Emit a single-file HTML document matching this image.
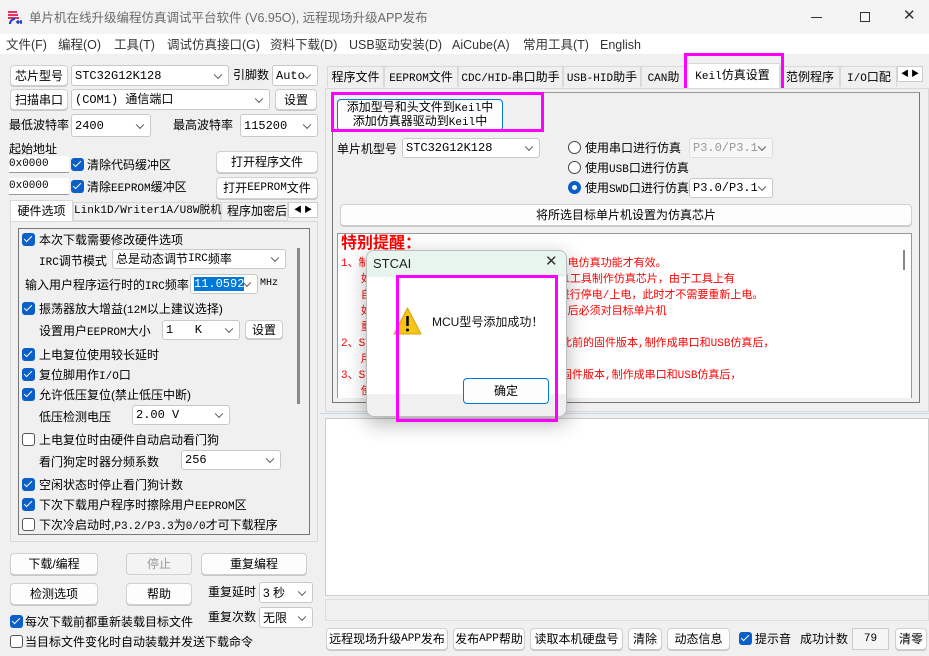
<!DOCTYPE html>
<html><head><meta charset="utf-8"><style>
*{box-sizing:border-box;margin:0;padding:0}
body{width:929px;height:656px;overflow:hidden;background:#f0f0f0;font-family:"Liberation Sans","Noto Sans CJK SC",sans-serif;font-size:12px;color:#000;position:relative}
.a{position:absolute;white-space:nowrap;line-height:16px}
.btn{position:absolute;background:#fdfdfd;border:1px solid #d0d0d0;border-radius:4px;text-align:center;font-size:12px;display:flex;align-items:center;justify-content:center;box-shadow:0 1px 0 #c8c8c8;line-height:14px}
.sel{position:absolute;background:#fff;border:1px solid #c8c8c8;border-radius:3px;padding-left:3px;font-family:"Liberation Mono","Noto Sans CJK SC",monospace;font-size:12px;display:flex;align-items:center;line-height:14px}
.sel:after{content:"";position:absolute;right:7px;top:50%;width:5px;height:5px;border-right:1px solid #555;border-bottom:1px solid #555;transform:translateY(-70%) rotate(45deg)}
.cb{position:absolute;width:13px;height:13px;border-radius:3px;background:#0a5fc8}
.cb:after{content:"";position:absolute;left:4px;top:1px;width:3px;height:7px;border-right:1.5px solid #fff;border-bottom:1.5px solid #fff;transform:rotate(45deg)}
.ub{position:absolute;width:13px;height:13px;border-radius:3px;border:1px solid #555;background:#fff}
.m{font-family:"Liberation Mono","Noto Sans CJK SC",monospace;font-size:11px;line-height:1}
.tab{position:absolute;top:66px;height:21px;border:1px solid #d9d9d9;border-bottom:none;background:#f0f0f0;font-size:12px;text-align:center;line-height:20px}
.red{position:absolute;left:341px;color:#f00;font-family:"Liberation Mono","Noto Sans CJK SC",monospace;font-size:11px;white-space:nowrap;line-height:16px}
.mg{position:absolute;border:3px solid #f0f;}
.mn{position:absolute;top:37px;font-size:12.5px;color:#333;line-height:16px;white-space:nowrap}
</style></head><body>
<div class="a" style="left:0;top:0;width:929px;height:34px;background:#f3f3f3"></div>
<svg class="a" style="left:7px;top:9px" width="16" height="16" viewBox="0 0 16 16"><path d="M1 3h9M1 6h10M1 9h11" stroke="#e83060" stroke-width="2"/><path d="M3 15a5 5 0 0 1 5-5" stroke="#1a3ad0" stroke-width="2" fill="none"/><path d="M11 11v4M14 11v4M9 13h6" stroke="#1a3ad0" stroke-width="1.5"/></svg>
<div class="a" style="left:29px;top:10px;font-size:12.5px;color:#6a6a6a">单片机在线升级编程仿真调试平台软件 (V6.95O), 远程现场升级APP发布</div>
<div class="a" style="left:811px;top:17px;width:11px;height:1px;background:#333"></div>
<div class="a" style="left:860px;top:12px;width:10px;height:10px;border:1px solid #333"></div>
<div class="a" style="left:903px;top:8px;font-size:15px;color:#333">✕</div>
<div class="a" style="left:0;top:34px;width:929px;height:20px;background:#fff"></div>
<div class="mn" style="left:6px">文件(F)</div>
<div class="mn" style="left:58px">编程(O)</div>
<div class="mn" style="left:114px">工具(T)</div>
<div class="mn" style="left:167px">调试仿真接口(G)</div>
<div class="mn" style="left:270px">资料下载(D)</div>
<div class="mn" style="left:349px">USB驱动安装(D)</div>
<div class="mn" style="left:452px">AiCube(A)</div>
<div class="mn" style="left:523px">常用工具(T)</div>
<div class="mn" style="left:600px">English</div>

<div class="btn" style="left:10px;top:65px;width:58px;height:21px">芯片型号</div>
<div class="sel" style="left:71px;top:65px;width:158px;height:21px">STC32G12K128</div>
<div class="a" style="left:233px;top:67px">引脚数</div>
<div class="sel" style="left:272px;top:65px;width:46px;height:21px">Auto</div>
<div class="btn" style="left:10px;top:89px;width:58px;height:21px">扫描串口</div>
<div class="sel" style="left:71px;top:89px;width:199px;height:21px">(COM1) 通信端口</div>
<div class="btn" style="left:275px;top:89px;width:42px;height:21px">设置</div>
<div class="a" style="left:9px;top:117px">最低波特率</div>
<div class="sel" style="left:71px;top:114px;width:80px;height:23px">2400</div>
<div class="a" style="left:173px;top:117px">最高波特率</div>
<div class="sel" style="left:240px;top:114px;width:78px;height:23px">115200</div>
<div class="a" style="left:9px;top:141px">起始地址</div>
<div class="a m" style="left:9px;top:156px;width:60px;height:17px;background:#fff;border-bottom:1px solid #999;line-height:16px">0x0000</div>
<div class="cb" style="left:71px;top:158px"></div><div class="a" style="left:87px;top:157px">清除代码缓冲区</div>
<div class="btn" style="left:216px;top:151px;width:102px;height:22px">打开程序文件</div>
<div class="a m" style="left:9px;top:178px;width:60px;height:17px;background:#fff;border-bottom:1px solid #999;line-height:16px">0x0000</div>
<div class="cb" style="left:71px;top:180px"></div><div class="a" style="left:87px;top:179px">清除<span class="m">EEPROM</span>缓冲区</div>
<div class="btn" style="left:216px;top:177px;width:102px;height:22px">打开<span class="m">EEPROM</span>文件</div>
<div class="a" style="left:10px;top:200px;width:63px;height:22px;background:#fff;border:1px solid #d9d9d9;border-bottom:none;text-align:center;line-height:20px">硬件选项</div>
<div class="a m" style="left:73px;top:202px;width:148px;height:19px;border:1px solid #d9d9d9;text-align:center;line-height:17px">Link1D/Writer1A/U8W脱机</div>
<div class="a" style="left:221px;top:202px;width:67px;height:19px;border:1px solid #d9d9d9;overflow:hidden;line-height:17px;padding-left:5px">程序加密后</div>
<div class="a" style="left:288px;top:202px;width:30px;height:16px;background:#fff;border:1px solid #ccc;font-size:8px;line-height:14px;text-align:center">◀ ▶</div>
<div class="a" style="left:10px;top:221px;width:308px;height:321px;border:1px solid #d9d9d9;background:#f0f0f0"></div>
<div class="a" style="left:18px;top:228px;width:292px;height:307px;border:1px solid #777"></div>
<div class="a" style="left:297px;top:248px;width:3px;height:156px;background:#888"></div>
<div class="cb" style="left:22px;top:233px"></div><div class="a" style="left:39px;top:232px">本次下载需要修改硬件选项</div>
<div class="a" style="left:39px;top:253px"><span class="m">IRC</span>调节模式</div>
<div class="sel" style="left:112px;top:249px;width:174px;height:20px;font-family:'Liberation Sans','Noto Sans CJK SC',sans-serif">总是动态调节<span class="m">IRC</span>频率</div>
<div class="a" style="left:25px;top:277px">输入用户程序运行时的<span class="m">IRC</span>频率</div>
<div class="sel" style="left:190px;top:274px;width:68px;height:20px"><span style="background:#0078d7;color:#fff">11.0592</span></div>
<div class="a m" style="left:260px;top:279px;font-size:10px">MHz</div>
<div class="cb" style="left:22px;top:302px"></div><div class="a" style="left:39px;top:301px">振荡器放大增益(<span class="m">12M</span>以上建议选择)</div>
<div class="a" style="left:39px;top:323px">设置用户<span class="m">EEPROM</span>大小</div>
<div class="sel" style="left:162px;top:320px;width:78px;height:20px">1 &nbsp; K</div>
<div class="btn" style="left:245px;top:320px;width:38px;height:19px">设置</div>
<div class="cb" style="left:22px;top:348px"></div><div class="a" style="left:39px;top:347px">上电复位使用较长延时</div>
<div class="cb" style="left:22px;top:368px"></div><div class="a" style="left:39px;top:367px">复位脚用作<span class="m">I/O</span>口</div>
<div class="cb" style="left:22px;top:388px"></div><div class="a" style="left:39px;top:387px">允许低压复位(禁止低压中断)</div>
<div class="a" style="left:39px;top:409px">低压检测电压</div>
<div class="sel" style="left:132px;top:405px;width:98px;height:20px">2.00 V</div>
<div class="ub" style="left:22px;top:433px"></div><div class="a" style="left:39px;top:432px">上电复位时由硬件自动启动看门狗</div>
<div class="a" style="left:39px;top:454px">看门狗定时器分频系数</div>
<div class="sel" style="left:181px;top:450px;width:100px;height:20px">256</div>
<div class="cb" style="left:22px;top:478px"></div><div class="a" style="left:39px;top:477px">空闲状态时停止看门狗计数</div>
<div class="cb" style="left:22px;top:498px"></div><div class="a" style="left:39px;top:497px">下次下载用户程序时擦除用户<span class="m">EEPROM</span>区</div>
<div class="ub" style="left:22px;top:518px"></div><div class="a" style="left:39px;top:517px">下次冷启动时,<span class="m">P3.2/P3.3</span>为<span class="m">0/0</span>才可下载程序</div>
<div class="btn" style="left:10px;top:553px;width:88px;height:22px">下载/编程</div>
<div class="btn" style="left:126px;top:553px;width:66px;height:22px;color:#999;background:#f4f4f4;box-shadow:none">停止</div>
<div class="btn" style="left:201px;top:553px;width:106px;height:22px">重复编程</div>
<div class="btn" style="left:10px;top:583px;width:88px;height:22px">检测选项</div>
<div class="btn" style="left:126px;top:583px;width:66px;height:22px">帮助</div>
<div class="a" style="left:208px;top:584px">重复延时</div>
<div class="sel" style="left:259px;top:582px;width:54px;height:21px;font-family:'Liberation Sans','Noto Sans CJK SC',sans-serif">3 秒</div>
<div class="a" style="left:208px;top:609px">重复次数</div>
<div class="sel" style="left:259px;top:607px;width:54px;height:21px;font-family:'Liberation Sans','Noto Sans CJK SC',sans-serif">无限</div>
<div class="cb" style="left:10px;top:615px"></div><div class="a" style="left:25px;top:614px">每次下载前都重新装载目标文件</div>
<div class="ub" style="left:10px;top:635px"></div><div class="a" style="left:25px;top:634px">当目标文件变化时自动装载并发送下载命令</div>

<div class="tab" style="left:327px;width:57px">程序文件</div>
<div class="tab" style="left:384px;width:74px"><span class="m">EEPROM</span>文件</div>
<div class="tab" style="left:458px;width:105px"><span class="m">CDC/HID</span>-串口助手</div>
<div class="tab" style="left:563px;width:78px"><span class="m">USB-HID</span>助手</div>
<div class="tab" style="left:641px;width:45px;overflow:hidden"><span class="m">CAN</span>助手</div>
<div class="tab" style="left:685px;top:63px;height:28px;width:95px;background:#fff;line-height:22px"><span class="m">Keil</span>仿真设置</div>
<div class="tab" style="left:780px;width:60px">范例程序</div>
<div class="tab" style="left:840px;width:57px;overflow:hidden;text-align:left;padding-left:6px"><span class="m">I/O</span>口配置</div>
<div class="a" style="left:897px;top:66px;width:26px;height:16px;background:#fff;border:1px solid #ccc;font-size:8px;line-height:14px;text-align:center">◀ ▶</div>
<div class="mg" style="left:684px;top:53px;width:100px;height:40px"></div>
<div class="a" style="left:325px;top:88px;width:604px;height:324px;border:1px solid #d9d9d9;background:#f0f0f0"></div>
<div class="a" style="left:332px;top:92px;width:588px;height:311px;border:1px solid #777;border-top-color:#999"></div>
<div class="btn" style="left:337px;top:99px;width:166px;height:32px;line-height:12px;border-color:#0078d7;flex-direction:column"><div>添加型号和头文件到<span class="m">Keil</span>中</div><div>添加仿真器驱动到<span class="m">Keil</span>中</div></div>
<div class="mg" style="left:331px;top:92px;width:213px;height:40px"></div>
<div class="a" style="left:337px;top:141px">单片机型号</div>
<div class="sel" style="left:402px;top:138px;width:138px;height:20px">STC32G12K128</div>
<div class="a" style="left:568px;top:141px;width:13px;height:13px;border:1px solid #444;border-radius:50%;background:#fff"></div>
<div class="a" style="left:585px;top:140px">使用串口进行仿真</div>
<div class="sel" style="left:689px;top:138px;width:84px;height:20px;color:#999;background:#f7f7f7;border-color:#ddd">P3.0/P3.1</div>
<div class="a" style="left:568px;top:161px;width:13px;height:13px;border:1px solid #444;border-radius:50%;background:#fff"></div>
<div class="a" style="left:585px;top:160px">使用<span class="m">USB</span>口进行仿真</div>
<div class="a" style="left:568px;top:181px;width:13px;height:13px;border:4px solid #0a5fc8;border-radius:50%;background:#fff"></div>
<div class="a" style="left:585px;top:180px">使用<span class="m">SWD</span>口进行仿真</div>
<div class="sel" style="left:689px;top:178px;width:84px;height:20px">P3.0/P3.1</div>
<div class="btn" style="left:340px;top:204px;width:572px;height:22px">将所选目标单片机设置为仿真芯片</div>
<div class="a" style="left:337px;top:233px;width:575px;height:165px;background:#fff;border:1px solid #999;border-bottom:none"></div>
<div class="a" style="left:903px;top:250px;width:2px;height:20px;background:#888"></div>
<div class="red" style="top:234px;font-size:16px;line-height:20px;font-weight:bold;font-family:'Liberation Sans','Noto Sans CJK SC',sans-serif">特别提醒：</div>
<div class="red" style="top:256px">1、制作仿真芯片后，需要给目标单片机重新上电仿真功能才有效。</div>
<div class="red" style="top:272px">&nbsp;&nbsp;&nbsp;如果使用U8W/U8-Mini/STC-USB Link1工具制作仿真芯片，由于工具上有</div>
<div class="red" style="top:288px">&nbsp;&nbsp;&nbsp;自动上电控制电路，所以制作完成后自动进行停电/上电，此时才不需要重新上电。</div>
<div class="red" style="top:304px">&nbsp;&nbsp;&nbsp;如果使用普通串口或USB下载口，制作完成后必须对目标单片机</div>
<div class="red" style="top:320px">&nbsp;&nbsp;&nbsp;重新上电，然后才可使用Keil进行仿真。</div>
<div class="red" style="top:336px">2、STC-USB Link1工具需要升级7.4.13及此前的固件版本,制作成串口和USB仿真后，</div>
<div class="red" style="top:352px">&nbsp;&nbsp;&nbsp;用</div>
<div class="red" style="top:368px">3、STC-USB Link1工具如果是使用7.4.13固件版本,制作成串口和USB仿真后，</div>
<div class="red" style="top:384px;height:14px;overflow:hidden">&nbsp;&nbsp;&nbsp;使用时需要将固件版本更新到7.4.14版本</div>
<div class="a" style="left:320px;top:413px;width:609px;height:1px;background:#c8d8e8"></div>
<div class="a" style="left:325px;top:418px;width:604px;height:178px;background:#fff;border:1px solid #ccc"></div>
<div class="a" style="left:325px;top:599px;width:604px;height:22px;background:#f0f0f0;border:1px solid #ddd"></div>
<div class="btn" style="left:326px;top:628px;width:122px;height:22px">远程现场升级<span class="m">APP</span>发布</div>
<div class="btn" style="left:453px;top:628px;width:72px;height:22px">发布<span class="m">APP</span>帮助</div>
<div class="btn" style="left:530px;top:628px;width:93px;height:22px">读取本机硬盘号</div>
<div class="btn" style="left:628px;top:628px;width:34px;height:22px">清除</div>
<div class="btn" style="left:667px;top:628px;width:63px;height:22px">动态信息</div>
<div class="cb" style="left:739px;top:632px"></div><div class="a" style="left:755px;top:631px">提示音</div>
<div class="a" style="left:800px;top:631px">成功计数</div>
<div class="a m" style="left:852px;top:628px;width:37px;height:22px;background:#f5f5f5;border:1px solid #ccc;text-align:center;line-height:20px">79</div>
<div class="btn" style="left:895px;top:628px;width:32px;height:22px">清零</div>

<div class="a" style="left:366px;top:250px;width:201px;height:167px;border-radius:8px;background:#f0f0f0;border:1px solid #bbb;box-shadow:0 6px 20px rgba(0,0,0,.3);overflow:hidden">
 <div class="a" style="left:0;top:0;width:201px;height:26px;background:#e8f5ee"></div>
 <div class="a" style="left:6px;top:5px;font-size:13px;color:#222">STCAI</div>
 <div class="a" style="left:178px;top:3px;font-size:15px;color:#333">✕</div>
 <div class="a" style="left:0;top:26px;width:201px;height:117px;background:#fff"></div>
 <svg class="a" style="left:26px;top:56px" width="29" height="28" viewBox="0 0 29 28"><path d="M14.5 1L28 27H1Z" fill="#f5c518" stroke="#d9a300" stroke-linejoin="round"/><path d="M14.5 9v10" stroke="#000" stroke-width="2.5"/><circle cx="14.5" cy="23" r="1.5"/></svg>
 <div class="a" style="left:65px;top:63px;color:#111">MCU型号添加成功！</div>
 <div class="btn" style="left:96px;top:127px;width:86px;height:26px;border-color:#0078d7;background:#fdfdfd;box-shadow:none">确定</div>
</div>
<div class="mg" style="left:396px;top:275px;width:162px;height:147px"></div>
</body></html>
